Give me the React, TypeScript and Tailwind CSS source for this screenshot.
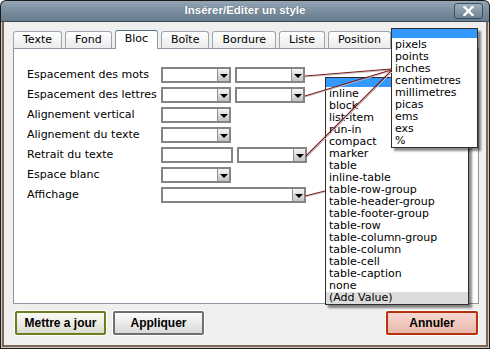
import React from "react";

function Arrow() {
  return (
    <div className="flex w-[12px] flex-col items-center justify-end border-l border-[#8f8f8f] bg-gradient-to-b from-[#f6f6f6] to-[#c4c4c4] pb-[3px]">
      <div className="h-0 w-0 border-x-[4px] border-t-[4px] border-x-transparent border-t-black" />
    </div>
  );
}

function Sel({ cls }: { cls: string }) {
  return (
    <div className={`flex h-[16px] items-stretch justify-end border-2 border-[#858585] bg-white ${cls}`}>
      <Arrow />
    </div>
  );
}

function Tab({ label, active }: { label: string; active?: boolean }) {
  if (active)
    return (
      <div className="relative z-10 -mb-px flex h-[19px] items-center rounded-t-[3px] border border-b-0 border-[#8c97a2] border-t-[#55708c] bg-white px-[9px] pb-[2px]">
        {label}
      </div>
    );
  return (
    <div className="flex h-[17px] items-center rounded-t-[3px] border border-b-0 border-[#9aa5b0] bg-gradient-to-b from-white to-[#ebebeb] px-[9px]">
      {label}
    </div>
  );
}

function Row({ label, children }: { label: string; children?: React.ReactNode }) {
  return (
    <div className="flex h-[20px] items-center">
      <span className="w-[134px] whitespace-nowrap">{label}</span>
      {children}
    </div>
  );
}

const units = ["pixels", "points", "inches", "centimetres", "millimetres", "picas", "ems", "exs", "%"];
const displays = [
  "inline",
  "block",
  "list-item",
  "run-in",
  "compact",
  "marker",
  "table",
  "inline-table",
  "table-row-group",
  "table-header-group",
  "table-footer-group",
  "table-row",
  "table-column-group",
  "table-column",
  "table-cell",
  "table-caption",
  "none",
];

export default function App() {
  return (
    <div className="relative h-[349px] w-[490px] overflow-hidden rounded-t-[6px] bg-[#1c1c1c] p-px font-['DejaVu_Sans',Verdana,sans-serif] text-[11px] text-black">
      <div className="flex h-full flex-col overflow-hidden rounded-t-[5px]">
        {/* title bar */}
        <div className="relative flex h-[21px] shrink-0 items-center justify-center border-b border-[#3c4a55] bg-gradient-to-b from-[#95a6b5] via-[#7a8ea0] to-[#687c8e]">
          <span className="font-['Liberation_Sans',Arial,sans-serif] text-[11.5px] font-bold text-white [text-shadow:0_0_1px_#4a5a66]">
            Insérer/Editer un style
          </span>
          <div className="absolute right-[6px] top-[2px] flex h-[16px] w-[29px] items-center justify-center rounded-[3px] border border-[#3e4d59] bg-gradient-to-b from-[#9fb0be] to-[#6f8394]">
            <svg width="11" height="10" viewBox="0 0 11 10">
              <path d="M1.5 1 L9.5 9 M9.5 1 L1.5 9" stroke="white" strokeWidth="2.4" strokeLinecap="square" />
            </svg>
          </div>
        </div>
        {/* frame */}
        <div className="flex flex-1 flex-col bg-[#cfc9c2] px-px pb-px">
          <div className="flex flex-1 flex-col border-x-2 border-b-2 border-[#7d6655] bg-[#efefee]">
            <div className="pl-[9px] pr-[7px] pt-[8px]">
              <div className="flex items-end gap-[3px]">
                <Tab label="Texte" />
                <Tab label="Fond" />
                <Tab label="Bloc" active />
                <Tab label="Boîte" />
                <Tab label="Bordure" />
                <Tab label="Liste" />
                <Tab label="Position" />
              </div>
              <div className="h-[256px] border border-[#8c97a2] bg-white pl-[13px] pt-[16px]">
                <Row label="Espacement des mots">
                  <Sel cls="w-[70px]" />
                  <Sel cls="ml-[4px] w-[70px]" />
                </Row>
                <Row label="Espacement des lettres">
                  <Sel cls="w-[70px]" />
                  <Sel cls="ml-[4px] w-[70px]" />
                </Row>
                <Row label="Alignement vertical">
                  <Sel cls="w-[70px]" />
                </Row>
                <Row label="Alignement du texte">
                  <Sel cls="w-[70px]" />
                </Row>
                <Row label="Retrait du texte">
                  <div className="h-[16px] w-[72px] border-2 border-[#858585] bg-white" />
                  <Sel cls="ml-[4px] w-[70px]" />
                </Row>
                <Row label="Espace blanc">
                  <Sel cls="w-[70px]" />
                </Row>
                <Row label="Affichage">
                  <Sel cls="w-[145px]" />
                </Row>
              </div>
            </div>
            <div className="mt-[7px] flex items-start justify-between pl-[11px] pr-[8px]">
              <div className="flex gap-[7px]">
                <button className="flex h-[24px] w-[91px] items-center justify-center rounded-[2px] border-2 border-[#6e7d1f] bg-gradient-to-b from-[#fbfbf6] to-[#dcdcd2] font-['Liberation_Sans',Arial,sans-serif] text-[12px] font-bold shadow-[0_0_0_1px_#ffffff]">
                  Mettre a jour
                </button>
                <button className="flex h-[24px] w-[91px] items-center justify-center rounded-[2px] border-2 border-[#707070] bg-gradient-to-b from-[#fbfbfb] to-[#dadada] font-['Liberation_Sans',Arial,sans-serif] text-[12px] font-bold shadow-[0_0_0_1px_#ffffff]">
                  Appliquer
                </button>
              </div>
              <button className="flex h-[24px] w-[92px] items-center justify-center rounded-[2px] border-2 border-[#b8310f] bg-gradient-to-b from-[#f8d8d0] to-[#e9b8ac] font-['Liberation_Sans',Arial,sans-serif] text-[12px] font-bold shadow-[0_0_0_1px_#ffffff]">
                Annuler
              </button>
            </div>
          </div>
        </div>
      </div>

      {/* display dropdown */}
      <div className="absolute left-[325px] top-[77px] w-[144px] border border-[#2e2e2e] bg-white shadow-[3px_3px_2px_rgba(0,0,0,0.45)]">
        <div className="h-[9px] bg-[#3399ff]" />
        <div className="h-px" />
        {displays.map((u) => (
          <div key={u} className="h-[12px] pl-[3px] leading-[12px]">
            {u}
          </div>
        ))}
        <div className="h-[12px] bg-[#dcdcdc] pl-[3px] leading-[12px]">(Add Value)</div>
      </div>

      {/* units dropdown */}
      <div className="absolute left-[391px] top-[28px] w-[87px] border border-[#2e2e2e] bg-white shadow-[3px_3px_2px_rgba(0,0,0,0.45)]">
        <div className="h-[9px] bg-[#3399ff]" />
        <div className="h-px" />
        {units.map((u) => (
          <div key={u} className="h-[12px] pl-[3px] leading-[12px]">
            {u}
          </div>
        ))}
      </div>

      {/* connector lines */}
      <svg className="pointer-events-none absolute left-0 top-0" width="490" height="349">
        <g stroke="#c4c4c4" strokeWidth="1" fill="none">
          <line x1="305" y1="77" x2="391" y2="70" />
          <line x1="305" y1="97" x2="391" y2="71" />
          <line x1="307" y1="157" x2="392" y2="72" />
          <line x1="305" y1="197" x2="325" y2="192" />
        </g>
        <g stroke="#7e1a1a" strokeWidth="1.1" fill="none">
          <line x1="305" y1="76" x2="391" y2="69" />
          <line x1="305" y1="96" x2="391" y2="70" />
          <line x1="306" y1="156" x2="391" y2="71" />
          <line x1="305" y1="196" x2="325" y2="191" />
        </g>
      </svg>
    </div>
  );
}
